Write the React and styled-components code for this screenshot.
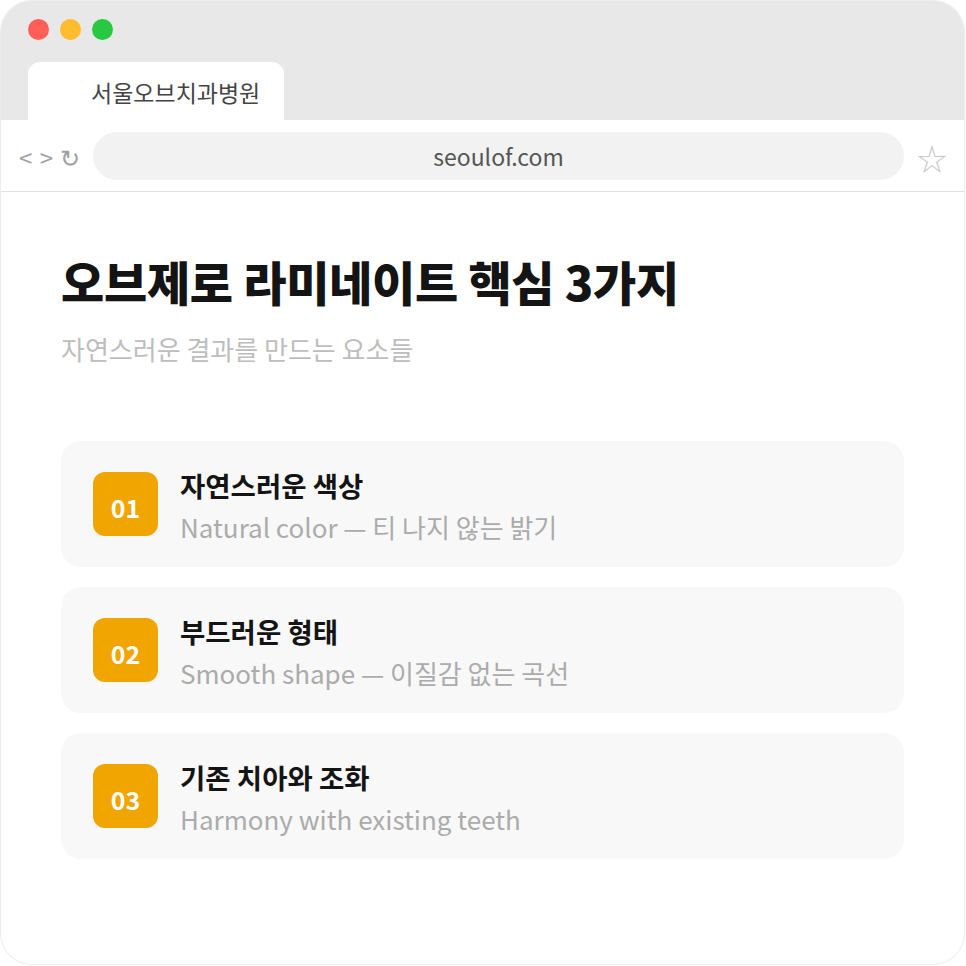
import styled, { createGlobalStyle } from 'styled-components';

const GlobalStyle = createGlobalStyle`
  html, body { margin: 0; padding: 0; background: #fff; }
  body { font-family: "Noto Sans CJK KR", "Noto Sans", sans-serif; }
  * { box-sizing: border-box; }
`;

const items = [
    { num: '01', title: '자연스러운 색상', sub: 'Natural color — 티 나지 않는 밝기' },
    { num: '02', title: '부드러운 형태', sub: 'Smooth shape — 이질감 없는 곡선' },
    { num: '03', title: '기존 치아와 조화', sub: 'Harmony with existing teeth' },
];

function App() {
    return (
        <>
            <GlobalStyle />
            <Window>
                <TopBar>
                    <Dots>
                        <Dot color="#ff5f57" />
                        <Dot color="#febc2e" />
                        <Dot color="#28c840" />
                    </Dots>
                    <Tab>서울오브치과병원</Tab>
                </TopBar>
                <AddressRow>
                    <Nav>&lt; &gt; ↻</Nav>
                    <Url>seoulof.com</Url>
                    <Star>☆</Star>
                </AddressRow>
                <Content>
                    <Title>오브제로 라미네이트 핵심 3가지</Title>
                    <Subtitle>자연스러운 결과를 만드는 요소들</Subtitle>
                    <List>
                        {items.map((item) => (
                            <Card key={item.num}>
                                <Badge>{item.num}</Badge>
                                <CardText>
                                    <CardTitle>{item.title}</CardTitle>
                                    <CardSub>{item.sub}</CardSub>
                                </CardText>
                            </Card>
                        ))}
                    </List>
                </Content>
            </Window>
        </>
    );
}

const Window = styled.div`
    width: 965px; height: 965px;
    border: 1px solid #ececec;
    border-radius: 32px;
    overflow: hidden;
    background: #fff;
    display: flex; flex-direction: column;
`;

const TopBar = styled.div`
    height: 119px;
    background: #e8e8e8;
    display: flex; flex-direction: column;
    padding: 18px 0 0 27px;
`;

const Dots = styled.div`
    display: flex; gap: 11px;
`;

const Dot = styled.span`
    width: 21px; height: 21px; border-radius: 50%;
    background: ${(p) => p.color};
`;

const Tab = styled.div`
    margin-top: 22px;
    width: 256px; height: 58px;
    background: #fff;
    border-radius: 12px 12px 0 0;
    padding: 16px 0 0 63px;
    font-size: 23px; line-height: 28px;
    color: #444;
`;

const AddressRow = styled.div`
    height: 72px;
    border-bottom: 1px solid #e0e0e0;
    display: flex; align-items: center;
    padding: 0 4px 0 18px;
`;

const Nav = styled.div`
    width: 74px;
    font-size: 24px; color: #a0a0a0;
    letter-spacing: 1px;
    padding-top: 2px;
`;

const Url = styled.div`
    flex: 1;
    height: 48px; border-radius: 24px;
    background: #f2f2f2;
    display: flex; align-items: center; justify-content: center;
    font-size: 23px; color: #555;
`;

const Star = styled.div`
    width: 56px; text-align: center;
    font-size: 30px; color: #c8c8c8;
    padding-top: 2px;
`;

const Content = styled.div`
    padding: 57px 60px 0 60px;
`;

const Title = styled.h1`
    margin: 0;
    font-size: 47px; line-height: 64px; font-weight: 900;
    color: #141414;
    letter-spacing: -0.3px;
`;

const Subtitle = styled.p`
    margin: 19px 0 0;
    font-size: 26px; line-height: 34px;
    color: #bdbdbd;
`;

const List = styled.div`
    margin-top: 75px;
    display: flex; flex-direction: column; gap: 20px;
`;

const Card = styled.div`
    height: 126px;
    background: #f8f8f8;
    border-radius: 20px;
    display: flex; align-items: center; gap: 22px;
    padding: 0 32px;
`;

const Badge = styled.div`
    width: 65px; height: 64px;
    background: #f0a500;
    border-radius: 12px;
    color: #fff; font-weight: 700; font-size: 25px;
    display: flex; align-items: center; justify-content: center;
    padding-top: 6px;
`;

const CardText = styled.div`
    display: flex; flex-direction: column; gap: 6px;
    padding-top: 4px;
`;

const CardTitle = styled.div`
    font-size: 27.5px; line-height: 36px; font-weight: 700; color: #141414;
`;

const CardSub = styled.div`
    font-size: 26px; line-height: 36px; color: #ababab;
`;

export default App
